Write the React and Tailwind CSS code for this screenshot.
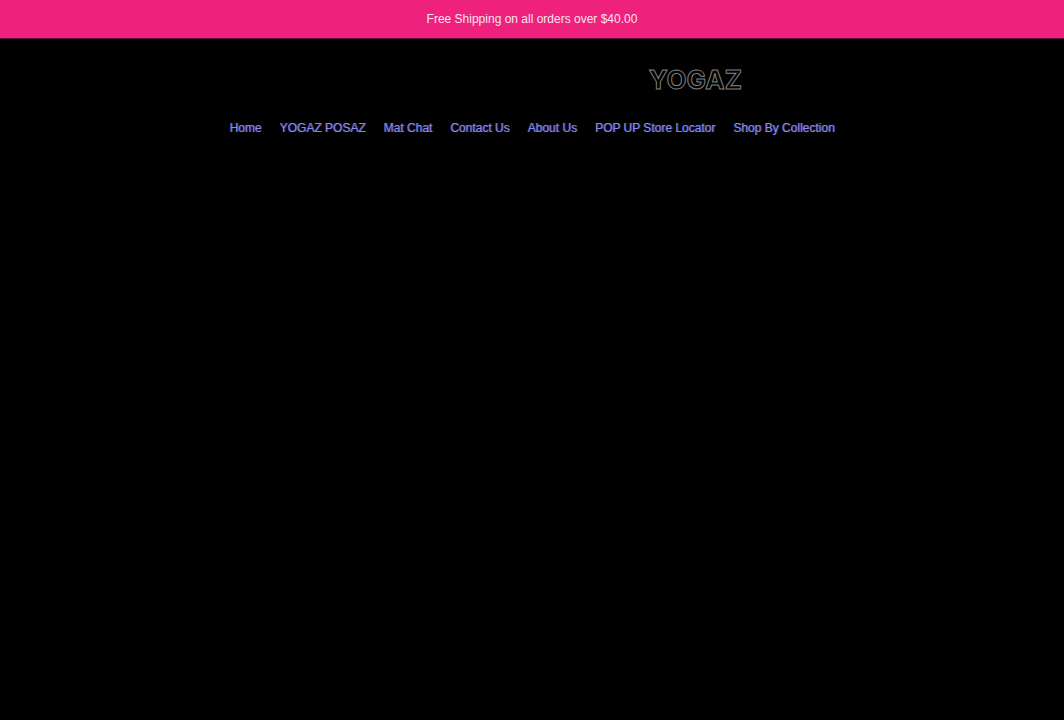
const links = [
  "Home",
  "YOGAZ POSAZ",
  "Mat Chat",
  "Contact Us",
  "About Us",
  "POP UP Store Locator",
  "Shop By Collection",
];

export default function App() {
  return (
    <div className="min-h-screen bg-black font-['Liberation_Sans',Arial,sans-serif]">
      <div className="border-b border-[#5c0d30] bg-[#ee217c] py-2 text-center">
        <p className="text-[12px] leading-[22px] text-[#fde3ee]">
          Free Shipping on all orders over $40.00
        </p>
      </div>
      <header className="flex flex-col items-center px-12 pt-6">
        <div className="flex w-full justify-end pr-[274px]">
          <a
            href="#home"
            className="font-['Inter',sans-serif] text-[26px] leading-[34px] font-bold text-black [-webkit-text-stroke:1px_#808080]"
          >
            YOGAZ
          </a>
        </div>
        <nav aria-label="Main" className="pt-[22px]">
          <ul className="flex flex-wrap justify-center gap-x-[18px]">
            {links.map((label) => (
              <li key={label}>
                <a
                  href="#menu"
                  className="block text-[12px] leading-[18px] text-[#8a8ae6] [text-shadow:1px_0_#40409a]"
                >
                  {label}
                </a>
              </li>
            ))}
          </ul>
        </nav>
      </header>
    </div>
  );
}
